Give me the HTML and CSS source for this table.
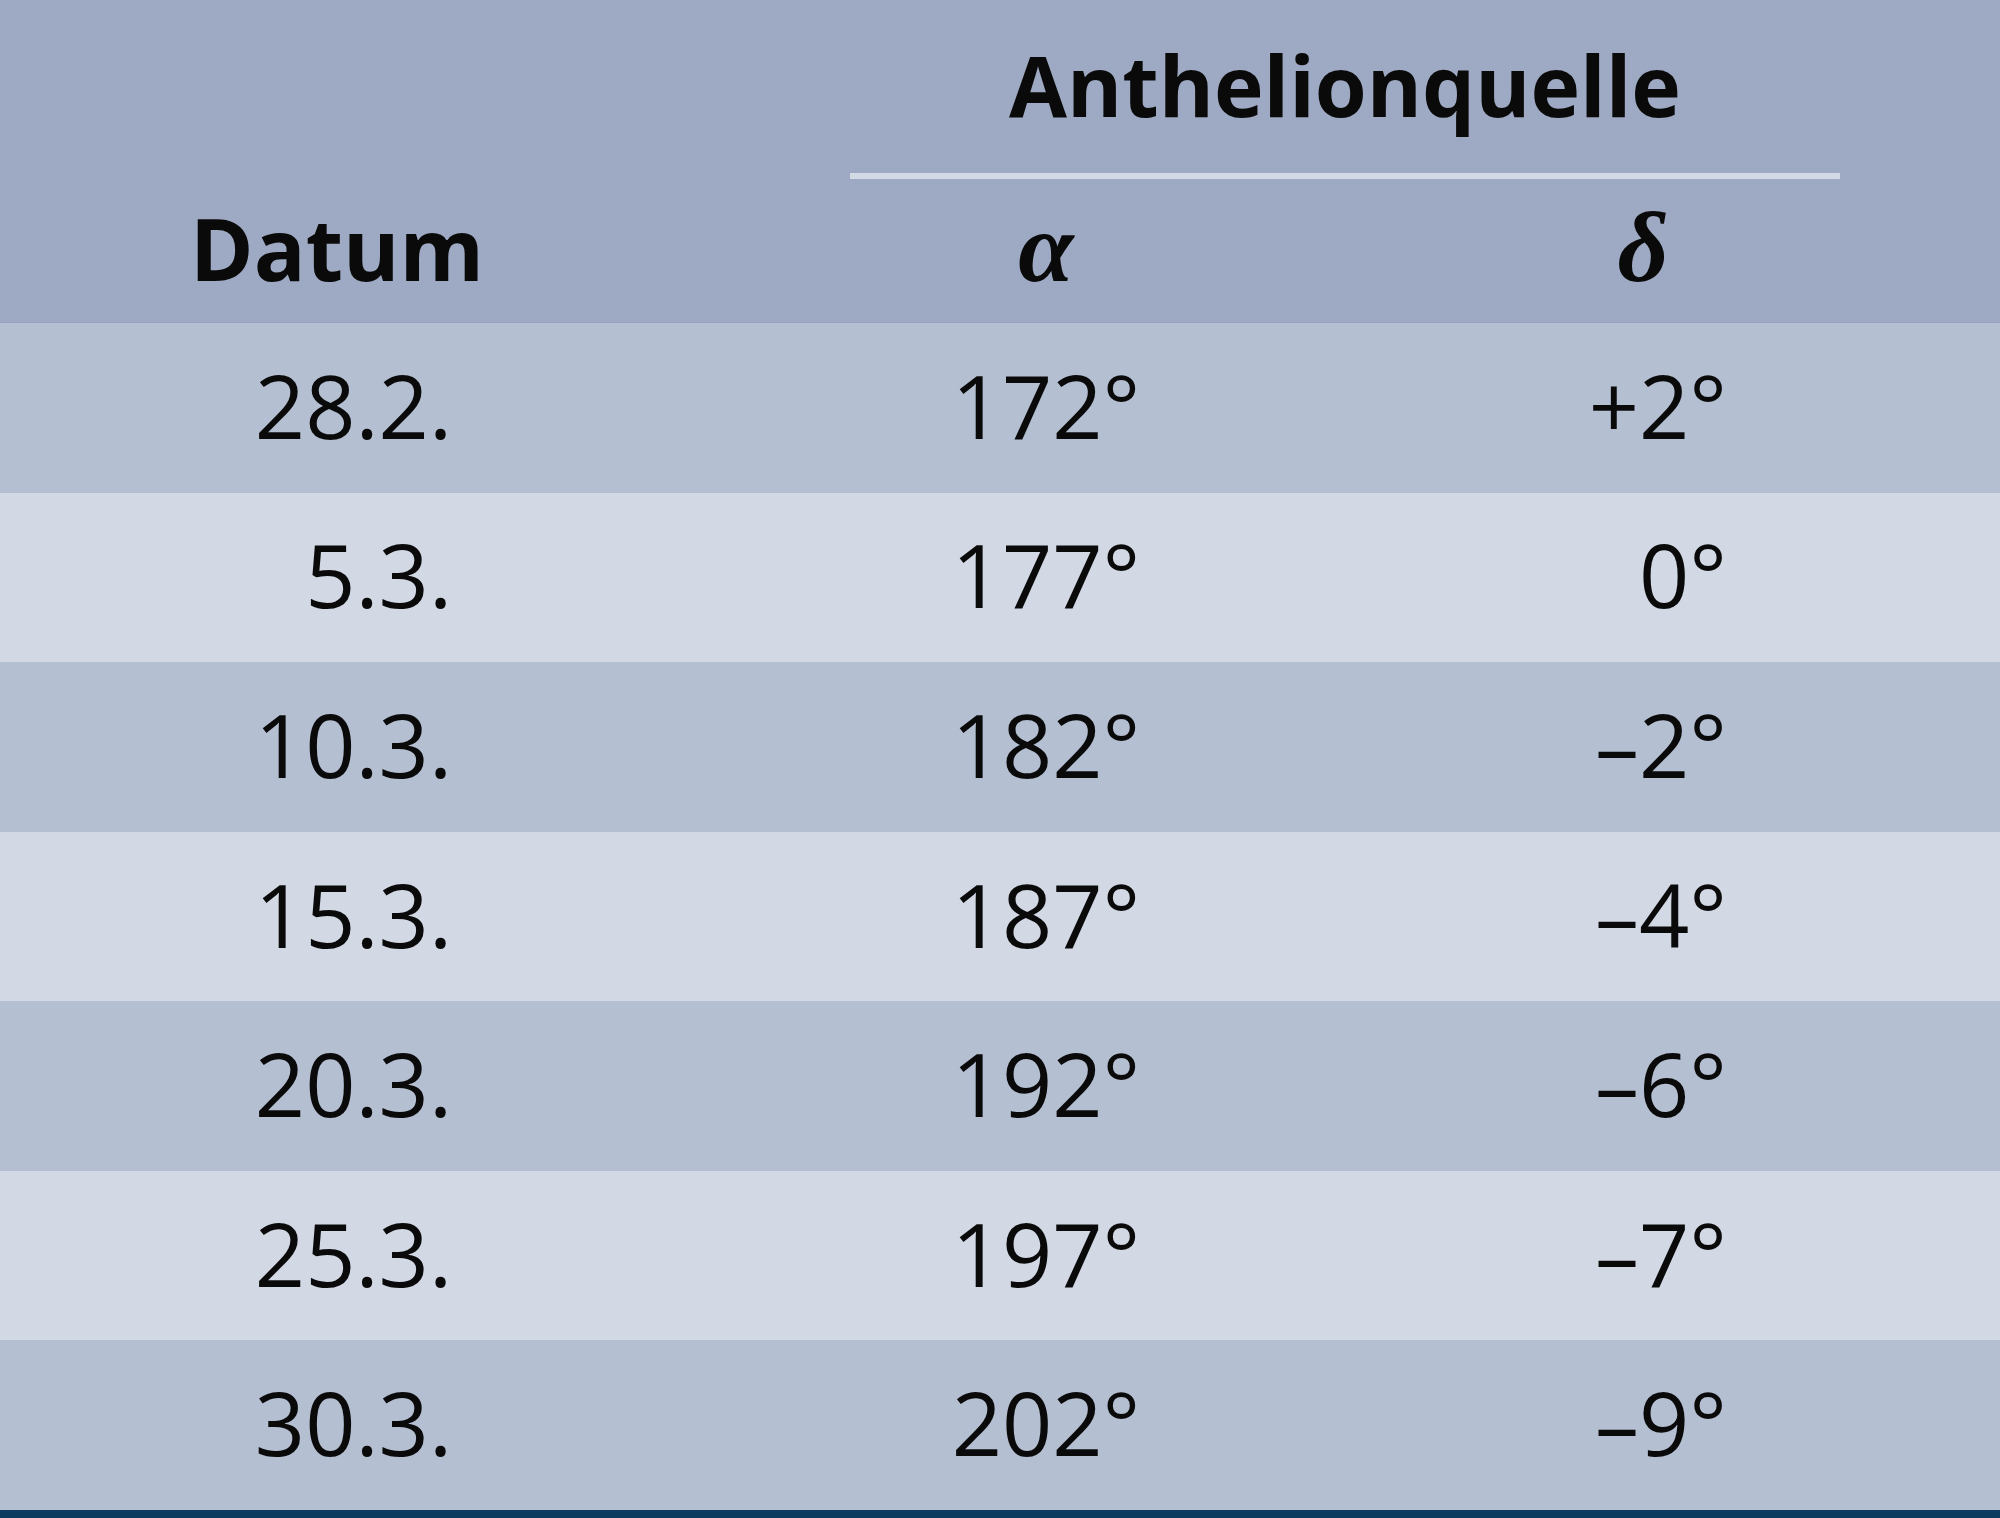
FILE: index.html
```html
<!DOCTYPE html>
<html lang="de">
<head>
<meta charset="utf-8">
<title>Anthelionquelle</title>
<link rel="stylesheet" href="styles.css">
</head>
<body>
<div class="table">
  <div class="head">
    <div class="head-top">
      <div class="group">Anthelionquelle</div>
    </div>
    <div class="row head-bottom">
      <div class="c1 h-datum">Datum</div>
      <div class="c2 greek">α</div>
      <div class="c3 greek">δ</div>
    </div>
  </div>
  <div class="body">
    <div class="row odd"><div class="c1">28.2.</div><div class="c2">172°</div><div class="c3">+2°</div></div>
    <div class="row even"><div class="c1">5.3.</div><div class="c2">177°</div><div class="c3">0°</div></div>
    <div class="row odd"><div class="c1">10.3.</div><div class="c2">182°</div><div class="c3">–2°</div></div>
    <div class="row even"><div class="c1">15.3.</div><div class="c2">187°</div><div class="c3">–4°</div></div>
    <div class="row odd"><div class="c1">20.3.</div><div class="c2">192°</div><div class="c3">–6°</div></div>
    <div class="row even"><div class="c1">25.3.</div><div class="c2">197°</div><div class="c3">–7°</div></div>
    <div class="row odd"><div class="c1">30.3.</div><div class="c2">202°</div><div class="c3">–9°</div></div>
  </div>
</div>
</body>
</html>
```
FILE: styles.css
```css
html, body {
  margin: 0;
  padding: 0;
}
body {
  width: 2000px;
  height: 1518px;
  overflow: hidden;
  font-family: "Open Sans", "Noto Sans", sans-serif;
  color: #0a0a0a;
  background: #b5bfd2;
}
.table {
  display: flex;
  flex-direction: column;
  width: 2000px;
  height: 1518px;
}
.head {
  background: #9eaac3;
  height: 323px;
  display: flex;
  flex-direction: column;
  border-bottom: 1px solid #97a3bc;
  box-sizing: border-box;
}
.head-top {
  height: 179px;
  display: flex;
  padding-left: 850px;
  box-sizing: border-box;
}
.group {
  width: 990px;
  height: 179px;
  box-sizing: border-box;
  border-bottom: 6px solid #d3d9e5;
  text-align: center;
  font-weight: 700;
  font-size: 84px;
  line-height: 1;
  padding-top: 43px;
}
.row {
  display: flex;
  align-items: center;
  font-size: 88px;
  line-height: 1;
}
.head-bottom {
  flex: 1;
  padding-bottom: 6px;
}
.c1 {
  width: 452px;
  text-align: right;
}
.c2 {
  width: 394px;
  margin-left: 397px;
  text-align: center;
}
.c3 {
  width: 281px;
  margin-left: 203px;
  text-align: right;
}
.h-datum {
  width: 674px;
  text-align: center;
  font-weight: 700;
  font-size: 86px;
}
.head-bottom .c2 {
  margin-left: 175px;
}
.head-bottom .c3 {
  width: 394px;
  text-align: center;
}
.greek {
  font-family: "Liberation Serif", "Times New Roman", serif;
  font-style: italic;
  font-weight: 700;
  font-size: 100px;
}
.body {
  flex: 1;
  display: flex;
  flex-direction: column;
  border-bottom: 8px solid #0b3b5f;
}
.body .row {
  flex: 1;
  padding-bottom: 6px;
  box-sizing: border-box;
}
.odd {
  background: #b5bfd2;
}
.even {
  background: #d2d8e4;
}
```
